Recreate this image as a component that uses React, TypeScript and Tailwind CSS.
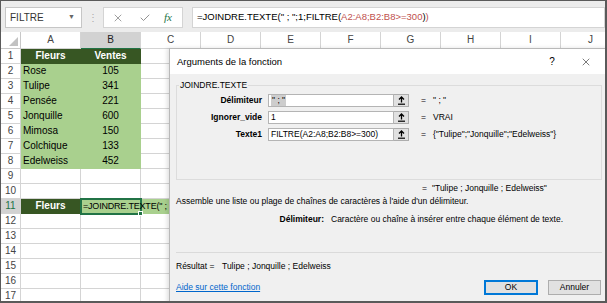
import { X, Check } from 'lucide-react';

const COLS = ['A', 'B', 'C', 'D', 'E', 'F', 'G', 'H', 'I', 'J'];

const data: Record<number, [string, string]> = {
  1: ['Fleurs', 'Ventes'],
  2: ['Rose', '105'],
  3: ['Tulipe', '341'],
  4: ['Pensée', '221'],
  5: ['Jonquille', '600'],
  6: ['Mimosa', '150'],
  7: ['Colchique', '133'],
  8: ['Edelweiss', '452'],
};

const plain = 'bg-white border-[#d4d4d4]';
const dark = 'bg-[#375623] border-[#375623] text-white font-bold text-center';
const light = 'bg-[#a9d08e] border-[#a9d08e] text-black';

function UploadIcon() {
  return (
    <svg width="9" height="9" viewBox="0 0 9 9">
      <path d="M4.5 1 V6.5 M2 3.5 L4.5 1 L7 3.5" stroke="#000" strokeWidth="1.3" fill="none" />
      <path d="M1 8.2 H8" stroke="#000" strokeWidth="1.2" />
    </svg>
  );
}

function ArgRow({ label, value, result, selected }: { label: string; value: string; result: string; selected?: boolean }) {
  return (
    <div className="flex h-[17px] items-center">
      <div className="w-[85px] shrink-0 text-right font-bold">{label}</div>
      <div className="ml-[6px] flex h-[13px] w-[126px] items-center border border-[#b4b4b4] bg-white px-[2px] text-[8.5px]">
        {selected ? <span className="bg-[#cdcdcd] px-px">" ; "</span> : <span>{value}</span>}
      </div>
      <div className="flex h-[13px] w-[15px] items-center justify-center border border-l-0 border-[#adadad] bg-[#e1e1e1]">
        <UploadIcon />
      </div>
      <div className="ml-[12px] w-[12px]">=</div>
      <div className="whitespace-nowrap">{result}</div>
    </div>
  );
}

function Dialog() {
  return (
    <div className="absolute left-[168px] top-[47px] z-20 h-[262px] w-[444px] border border-[#b9b9b9] bg-[#f0f0f0] text-[8.5px] leading-[11px] text-black shadow-[-2px_0_4px_rgba(0,0,0,0.12)]">
      <div className="flex h-[25px] items-center bg-white pl-[7px] text-[9.5px]">
        <span>Arguments de la fonction</span>
        <span className="ml-auto w-[34px] text-center text-[10px]">?</span>
        <span className="mr-[9px] flex w-[34px] justify-center">
          <X size={12} strokeWidth={1.2} color="#222" />
        </span>
      </div>
      <div className="pl-[6px]">
        <fieldset className="mt-[6px] w-[426px] border border-[#dcdcdc] pb-[36px]">
          <legend className="ml-[2px] px-px leading-[10px]">JOINDRE.TEXTE</legend>
          <div className="pt-[2px]">
            <ArgRow label="Délimiteur" value="" result={'" ; "'} selected />
            <ArgRow label="Ignorer_vide" value="1" result="VRAI" />
            <ArgRow label="Texte1" value="FILTRE(A2:A8;B2:B8>=300)" result={'{"Tulipe";"Jonquille";"Edelweiss"}'} />
          </div>
        </fieldset>
        <div className="mt-[2px] flex h-[13px] items-center pl-[246px]">
          <span className="w-[10px]">=</span>
          <span>"Tulipe ;  Jonquille ;  Edelweiss"</span>
        </div>
        <div className="flex h-[13px] items-center">
          Assemble une liste ou plage de chaînes de caractères à l'aide d'un délimiteur.
        </div>
        <div className="mt-[5px] flex h-[13px] items-center">
          <span className="w-[148px] text-right font-bold">Délimiteur:</span>
          <span className="ml-[7px]">Caractère ou chaîne à insérer entre chaque élément de texte.</span>
        </div>
        <div className="mt-[26px] h-px w-[426px] bg-[#dadada]" />
        <div className="mt-[7px] flex h-[13px] items-center">
          <span className="w-[46px]">Résultat =</span>
          <span>Tulipe ;  Jonquille ;  Edelweiss</span>
        </div>
        <div className="mt-[7px] flex w-[425px] items-center">
          <span className="text-[#0066cc] underline">Aide sur cette fonction</span>
          <div className="ml-auto flex gap-[10px]">
            <div className="flex h-[15px] w-[54px] items-center justify-center border-2 border-[#0078d7] bg-[#e1e1e1]">OK</div>
            <div className="flex h-[15px] w-[53px] items-center justify-center border border-[#adadad] bg-[#e1e1e1]">Annuler</div>
          </div>
        </div>
      </div>
    </div>
  );
}

function FormulaBar() {
  return (
    <div className="flex h-[30px] items-start bg-[#ececec] pt-[6px]">
      <div className="ml-[4px] flex h-[21px] w-[77px] items-center border border-[#c6c6c6] bg-white pl-[4px] text-[10px] text-[#333]">
        FILTRE
        <span className="ml-auto mr-[6px] text-[7px] text-[#666]">▼</span>
      </div>
      <div className="flex h-[21px] w-[21px] items-center justify-center text-[10px] text-[#aaa]">⋮</div>
      <div className="flex h-[21px] w-[80px] items-center border border-[#d4d4d4] bg-white">
        <span className="ml-[7px] flex w-[14px] justify-center">
          <X size={12} strokeWidth={1.4} color="#777" />
        </span>
        <span className="ml-[13px] flex w-[14px] justify-center">
          <Check size={12} strokeWidth={1.6} color="#777" />
        </span>
        <span className="ml-[12px] font-['Liberation_Serif',serif] text-[11px] italic text-[#217346]">fx</span>
      </div>
      <div className="ml-[9px] flex h-[21px] flex-1 items-center border border-[#d4d4d4] bg-white pl-[4px] text-[9.5px] whitespace-nowrap">
        =JOINDRE.TEXTE(" ; ";1;FILTRE(<span className="text-[#c0504d]">A2:A8;B2:B8&gt;=300</span>)<span className="text-[#c0504d]">)</span>
      </div>
    </div>
  );
}

function Grid() {
  return (
    <div className="text-[10px] leading-[14px]">
      <div className="flex h-[17px]">
        <div className="relative w-[20px] shrink-0 border-r border-b border-[#c8c8c8] bg-white">
          <svg className="absolute bottom-[2px] right-[2px]" width="9" height="9" viewBox="0 0 9 9">
            <path d="M9 0 V9 H0 Z" fill="#c2c2c2" />
          </svg>
        </div>
        {COLS.map((c) => (
          <div
            key={c}
            className={`flex w-[60px] shrink-0 items-center justify-center border-r border-b border-[#d4d4d4] ${
              c === 'B' ? 'bg-[#d2d2d2] text-[#222] border-b-[#217346]' : 'bg-white text-[#444]'
            }`}
          >
            {c}
          </div>
        ))}
      </div>
      {Array.from({ length: 17 }, (_, i) => i + 1).map((r) => (
        <div key={r} className="flex h-[15px]">
          <div
            className={`w-[20px] shrink-0 border-r border-b border-[#d4d4d4] text-center ${
              r === 11 ? 'bg-[#d2d2d2] text-[#217346]' : 'bg-white text-[#444]'
            }`}
          >
            {r}
          </div>
          {COLS.map((c) => {
            const row = data[r];
            let cls = plain;
            let content: React.ReactNode = null;
            if (row && (c === 'A' || c === 'B')) {
              cls = r === 1 ? dark : light;
              const txt = c === 'A' ? row[0] : row[1];
              content = r === 1 ? txt : c === 'A' ? <span className="pl-[2px]">{txt}</span> : <span className="block text-center">{txt}</span>;
            }
            if (r === 11 && c === 'A') {
              cls = dark;
              content = 'Fleurs';
            }
            if (r === 11 && c === 'B') {
              return (
                <div key={c} className={`relative z-10 w-[60px] shrink-0 border-r border-b outline-2 -outline-offset-1 outline-[#217346] ${light}`}>
                  <span className="absolute left-[2px] top-0 whitespace-nowrap text-[9px] tracking-[-0.2px]">=JOINDRE.TEXTE(" ; </span>
                  <span className="absolute -bottom-[3px] -right-[3px] h-[5px] w-[5px] border border-white bg-[#217346]" />
                </div>
              );
            }
            if (r === 11 && c === 'C') cls = light;
            return (
              <div key={c} className={`w-[60px] shrink-0 overflow-visible whitespace-nowrap border-r border-b ${cls}`}>
                {content}
              </div>
            );
          })}
        </div>
      ))}
    </div>
  );
}

export default function App() {
  return (
    <div className="relative h-[303px] w-[607px] overflow-hidden border-t border-l border-r-2 border-b-2 border-[#5a5a5a] bg-white font-['Liberation_Sans',Arial,sans-serif] text-black">
      <FormulaBar />
      <div className="h-px bg-[#ececec]" />
      <Grid />
      <Dialog />
    </div>
  );
}
